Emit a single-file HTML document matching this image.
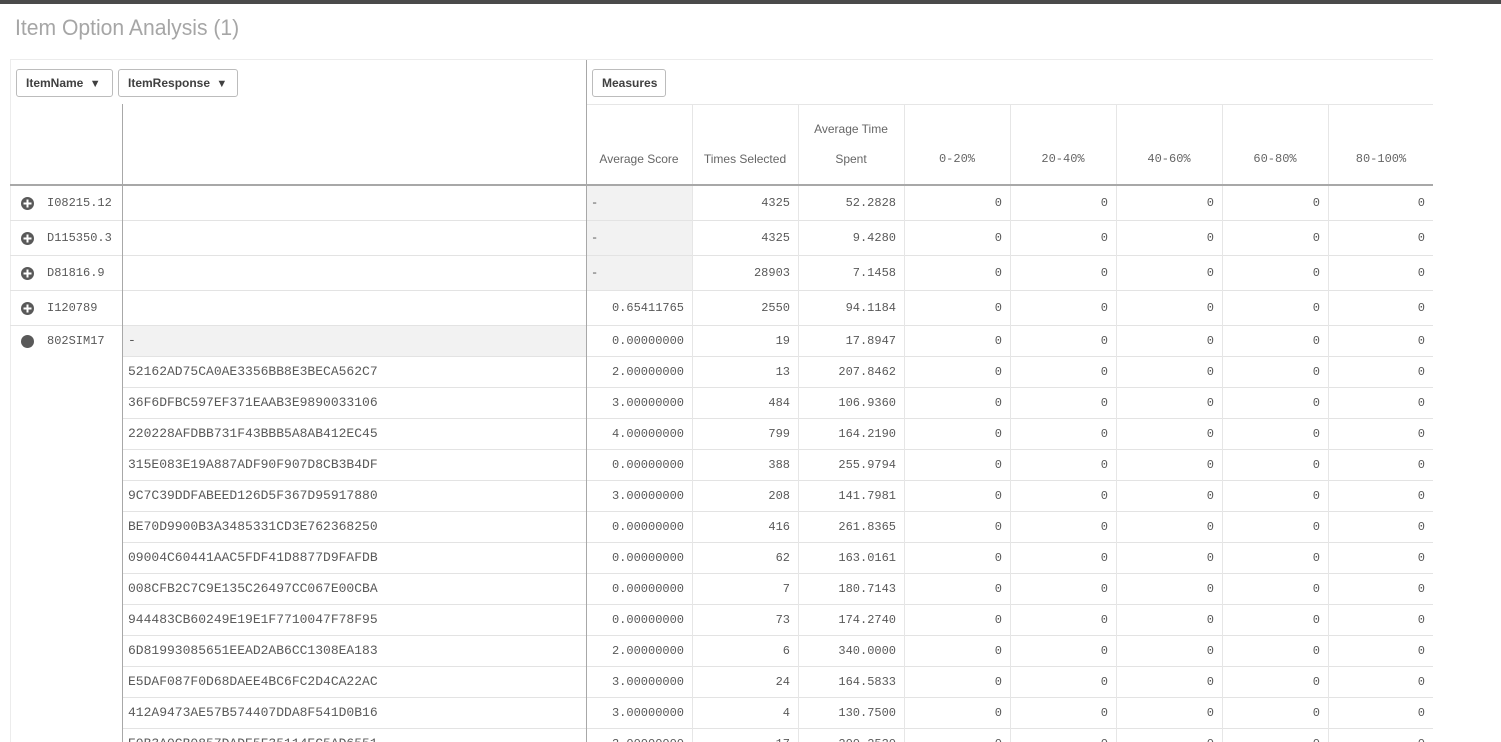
<!DOCTYPE html>
<html style="overflow:hidden"><head><meta charset="utf-8"><style>
*{margin:0;padding:0;box-sizing:border-box}
html,body{width:1501px;height:742px;overflow:hidden}
body{background:#fff;position:relative;font-family:"Liberation Sans",sans-serif;color:#595959}
.abs{position:absolute}
.title{left:15px;top:15px;font-size:22px;color:#a6a6a6;font-family:"Liberation Sans",sans-serif;transform:scaleX(0.96);transform-origin:left}
.btn{position:absolute;top:69px;height:28px;border:1px solid #bcbcbc;border-radius:3px;font-size:12px;font-weight:bold;color:#404040;line-height:26px;padding:0 9px;background:#fff}
.hd{position:absolute;font-size:12px;color:#666;text-align:center;width:106px}
.row{position:absolute;left:10px;width:1423px}
.c{position:absolute;top:0;height:100%;font-family:"Liberation Mono",monospace;font-size:12px;color:#595959;border-bottom:1px solid #e3e3e3;white-space:nowrap}
.n{text-align:right;padding-right:8px}
.vl{position:absolute;width:1px;background:#e6e6e6}
</style></head><body>
<div class="abs" style="left:0;top:0;width:1501px;height:4px;background:#4a4a4a"></div>
<div class="abs title">Item Option Analysis (1)</div>
<div class="abs" style="left:10px;top:59px;width:1423px;height:1px;background:#ececec"></div>
<div class="abs" style="left:10px;top:60px;width:1px;height:682px;background:#ececec"></div>
<div class="btn" style="left:16px;width:97px">ItemName <span style="font-size:11px;margin-left:3px">&#9660;</span></div>
<div class="btn" style="left:118px;width:120px">ItemResponse <span style="font-size:11px;margin-left:3px">&#9660;</span></div>
<div class="btn" style="left:592px;width:74px">Measures</div>
<div class="abs" style="left:586px;top:104px;width:847px;height:1px;background:#e6e6e6"></div>
<div class="hd" style="left:586px;top:152px">Average Score</div>
<div class="hd" style="left:692px;top:152px">Times Selected</div>
<div class="hd" style="left:798px;top:122px">Average Time</div>
<div class="hd" style="left:798px;top:152px">Spent</div>
<div class="hd" style="left:904px;top:152px;font-family:'Liberation Mono',monospace">0-20%</div>
<div class="hd" style="left:1010px;top:152px;font-family:'Liberation Mono',monospace">20-40%</div>
<div class="hd" style="left:1116px;top:152px;font-family:'Liberation Mono',monospace">40-60%</div>
<div class="hd" style="left:1222px;top:152px;font-family:'Liberation Mono',monospace">60-80%</div>
<div class="hd" style="left:1328px;top:152px;font-family:'Liberation Mono',monospace">80-100%</div>
<div id="rows"></div>
<div class="abs" style="left:10px;top:184px;width:1423px;height:2px;background:#a8a8a8"></div>
<div class="abs" style="left:122px;top:104px;width:1px;height:638px;background:#a8a8a8"></div>
<div class="abs" style="left:586px;top:60px;width:1px;height:682px;background:#a8a8a8"></div>
<script>
var rows=[
["I08215.12","","-","4325","52.2828",1,35,1],
["D115350.3","","-","4325","9.4280",1,35,1],
["D81816.9","","-","28903","7.1458",1,35,1],
["I120789","","0.65411765","2550","94.1184",1,35,0],
["802SIM17","-","0.00000000","19","17.8947",2,31,0],
["","52162AD75CA0AE3356BB8E3BECA562C7","2.00000000","13","207.8462",0,31,0],
["","36F6DFBC597EF371EAAB3E9890033106","3.00000000","484","106.9360",0,31,0],
["","220228AFDBB731F43BBB5A8AB412EC45","4.00000000","799","164.2190",0,31,0],
["","315E083E19A887ADF90F907D8CB3B4DF","0.00000000","388","255.9794",0,31,0],
["","9C7C39DDFABEED126D5F367D95917880","3.00000000","208","141.7981",0,31,0],
["","BE70D9900B3A3485331CD3E762368250","0.00000000","416","261.8365",0,31,0],
["","09004C60441AAC5FDF41D8877D9FAFDB","0.00000000","62","163.0161",0,31,0],
["","008CFB2C7C9E135C26497CC067E00CBA","0.00000000","7","180.7143",0,31,0],
["","944483CB60249E19E1F7710047F78F95","0.00000000","73","174.2740",0,31,0],
["","6D81993085651EEAD2AB6CC1308EA183","2.00000000","6","340.0000",0,31,0],
["","E5DAF087F0D68DAEE4BC6FC2D4CA22AC","3.00000000","24","164.5833",0,31,0],
["","412A9473AE57B574407DDA8F541D0B16","3.00000000","4","130.7500",0,31,0],
["","E0B3A0CB0857DADE5F35114EC5AD6551","3.00000000","17","200.2530",0,31,0]];
var y=186,h='';
rows.forEach(function(r){
 var H=r[6],lh='line-height:'+(H-1)+'px;';
 h+='<div class="row" style="top:'+y+'px;height:'+H+'px">';
 if(r[5]==1){h+='<div class="c" style="left:0;width:112px;'+lh+'"><svg style="position:absolute;left:11px;top:'+(H/2-7)+'px" width="13" height="13"><circle cx="6.5" cy="6.5" r="6.5" fill="#595959"/><rect x="5.5" y="2.5" width="2" height="8" fill="#fff"/><rect x="2.5" y="5.5" width="8" height="2" fill="#fff"/></svg><span style="position:absolute;left:37px">'+r[0]+'</span></div>';}
 else if(r[5]==2){h+='<div class="c" style="left:0;width:112px;border:none;'+lh+'"><svg style="position:absolute;left:11px;top:'+(H/2-7)+'px" width="13" height="13"><circle cx="6.5" cy="6.5" r="6.5" fill="#595959"/></svg><span style="position:absolute;left:37px">'+r[0]+'</span></div>';}
 var bg=r[1]=='-'?'background:#f2f2f2;':'';
 h+='<div class="c" style="left:112px;width:464px;padding-left:6px;font-size:13px;'+bg+lh+'">'+r[1]+'</div>';
 var g=r[7]?'background:#f2f2f2;text-align:left;padding-left:5px;':'';
 h+='<div class="c n" style="left:576px;width:106px;'+g+lh+'">'+r[2]+'</div>';
 h+='<div class="c n" style="left:682px;width:106px;'+lh+'">'+r[3]+'</div>';
 h+='<div class="c n" style="left:788px;width:106px;'+lh+'">'+r[4]+'</div>';
 for(var i=0;i<5;i++)h+='<div class="c n" style="left:'+(894+106*i)+'px;width:'+(i==4?105:106)+'px;'+lh+'">0</div>';
 h+='</div>';y+=H;});
[692,798,904,1010,1116,1222,1328].forEach(function(x){h+='<div class="vl" style="left:'+x+'px;top:104px;height:638px"></div>';});
document.getElementById('rows').innerHTML=h;
</script>
</body></html>
